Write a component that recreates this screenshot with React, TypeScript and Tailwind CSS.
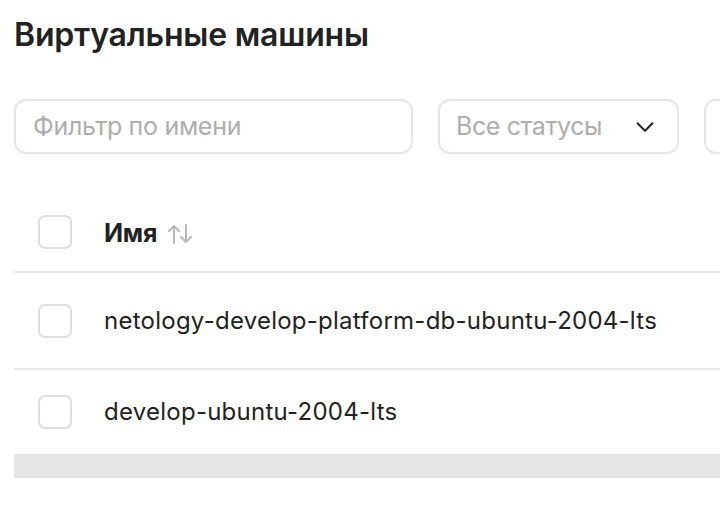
import { ChevronDown } from 'lucide-react';

const rows = ['netology-develop-platform-db-ubuntu-2004-lts', 'develop-ubuntu-2004-lts'];

const Checkbox = () => <div className="w-[34px] h-[34px] shrink-0 rounded-[7px] border-2 border-[#dedede] bg-white" />;

export default function App() {
  return (
    <div className="w-[720px] h-[524px] overflow-hidden bg-white pl-[14px] pt-[15px] text-[#222] font-['Inter',sans-serif]">
      <h1 className="text-[32px] leading-[40px] font-semibold tracking-[-0.2px]">Виртуальные машины</h1>

      <div className="mt-[44px] flex gap-[25px] items-center">
        <div className="w-[399px] h-[55px] shrink-0 rounded-[12px] border-2 border-[#e6e6e6] flex items-center px-[17px]">
          <span className="text-[25px] text-[#adadad] tracking-[-0.3px]">Фильтр по имени</span>
        </div>
        <div className="w-[241px] h-[55px] shrink-0 rounded-[12px] border-2 border-[#e6e6e6] flex items-center justify-between pl-[16px] pr-[17px]">
          <span className="text-[25px] text-[#adadad] tracking-[-0.4px]">Все статусы</span>
          <ChevronDown className="w-[30px] h-[30px] text-[#222]" strokeWidth={1.5} />
        </div>
        <div className="w-[200px] h-[55px] shrink-0 rounded-[12px] border-2 border-[#e6e6e6]" />
      </div>

      <div className="mt-[39px]">
        <div className="h-[80px] flex items-center pl-[24px] gap-[32px] border-b-2 border-[#e8e8e8]">
          <Checkbox />
          <div className="flex items-center gap-[9px] pt-[3px]">
            <span className="text-[25px] font-bold tracking-[-0.2px]">Имя</span>
            <svg width="28" height="24" viewBox="0 0 28 24" fill="none" stroke="#b8b8b8" strokeWidth="2" strokeLinecap="round" strokeLinejoin="round">
              <path d="M8 21V4M3 9l5-5 5 5" />
              <path d="M20 3v17M15 15l5 5 5-5" />
            </svg>
          </div>
        </div>
        {rows.map((name, i) => (
          <div key={name} className={`flex items-center pl-[24px] gap-[32px] ${i === 0 ? 'h-[97px] border-b-2 border-[#e8e8e8]' : 'h-[84px]'}`}>
            <Checkbox />
            <span className="text-[24px] tracking-[0.25px]">{name}</span>
          </div>
        ))}
        <div className="h-[24px] bg-[#e5e5e5]" />
      </div>
    </div>
  );
}
